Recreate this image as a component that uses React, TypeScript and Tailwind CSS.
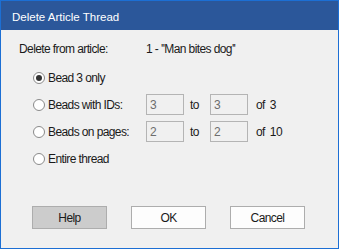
import React, { useState } from "react";

const body = "font-['Liberation_Sans',Arial,sans-serif] text-[12px] tracking-[-0.6px] text-[#1a1a1a]";

const Radio = ({ checked }: { checked: boolean }) => (
	<span className="flex justify-center items-center w-[12px] h-[12px] rounded-full border border-[#8a8a8a] bg-white shrink-0">
		{checked && <span className="w-[6px] h-[6px] rounded-full bg-[#333333]" />}
	</span>
);

const Field = ({ value }: { value: string }) => (
	<div className="flex items-center w-[38px] h-[21px] border border-[#b4b4b4] bg-[#f0f0f0] pl-[3px] text-[#6d6d6d]">
		{value}
	</div>
);

const Button = ({ label, dim = false }: { label: string; dim?: boolean }) => (
	<button
		className={
			"flex justify-center items-center w-[75px] h-[23px] border " +
			(dim ? "bg-[#cccccc] border-[#adadad]" : "bg-[#fdfdfd] border-[#adadad]")
		}
	>
		{label}
	</button>
);

export default function App() {
	const [choice, setChoice] = useState(0);
	const rows = [
		{ label: "Bead 3 only" },
		{ label: "Beads with IDs:", from: "3", to: "3", of: "3" },
		{ label: "Beads on pages:", from: "2", to: "2", of: "10" },
		{ label: "Entire thread" },
	];

	return (
		<div className="w-[339px] h-[249px] border border-[#1c6fd4] bg-[#f0f0f0] flex flex-col">
			{/* title bar */}
			<div className="h-[29px] bg-[#2b579a] flex items-center pl-[11px] pt-[5px] text-white font-['Liberation_Sans',Arial,sans-serif] text-[11.5px]">
				Delete Article Thread
			</div>

			<div className={"flex flex-col pl-[18px] pt-[11px] " + body}>
				<div className="flex items-center h-[16px]">
					<span className="w-[127px]">Delete from article:</span>
					<span>1 - ''Man bites dog''</span>
				</div>

				<div className="flex flex-col mt-[7px] pl-[14px]">
					{rows.map((r, i) => (
						<div key={i} className="flex items-center h-[27px]" onClick={() => setChoice(i)}>
							<div className="flex items-center gap-[3px] w-[113px]">
								<Radio checked={choice === i} />
								<span>{r.label}</span>
							</div>
							{r.from && (
								<>
									<Field value={r.from} />
									<span className="w-[26px] pl-[6px]">to</span>
									<Field value={r.to!} />
									<span className="pl-[8px]">of</span>
									<span className="pl-[5px]">{r.of}</span>
								</>
							)}
						</div>
					))}
				</div>

				<div className="flex gap-[24px] mt-[34px] pl-[13px]">
					<Button label="Help" dim />
					<Button label="OK" />
					<Button label="Cancel" />
				</div>
			</div>
		</div>
	);
}
